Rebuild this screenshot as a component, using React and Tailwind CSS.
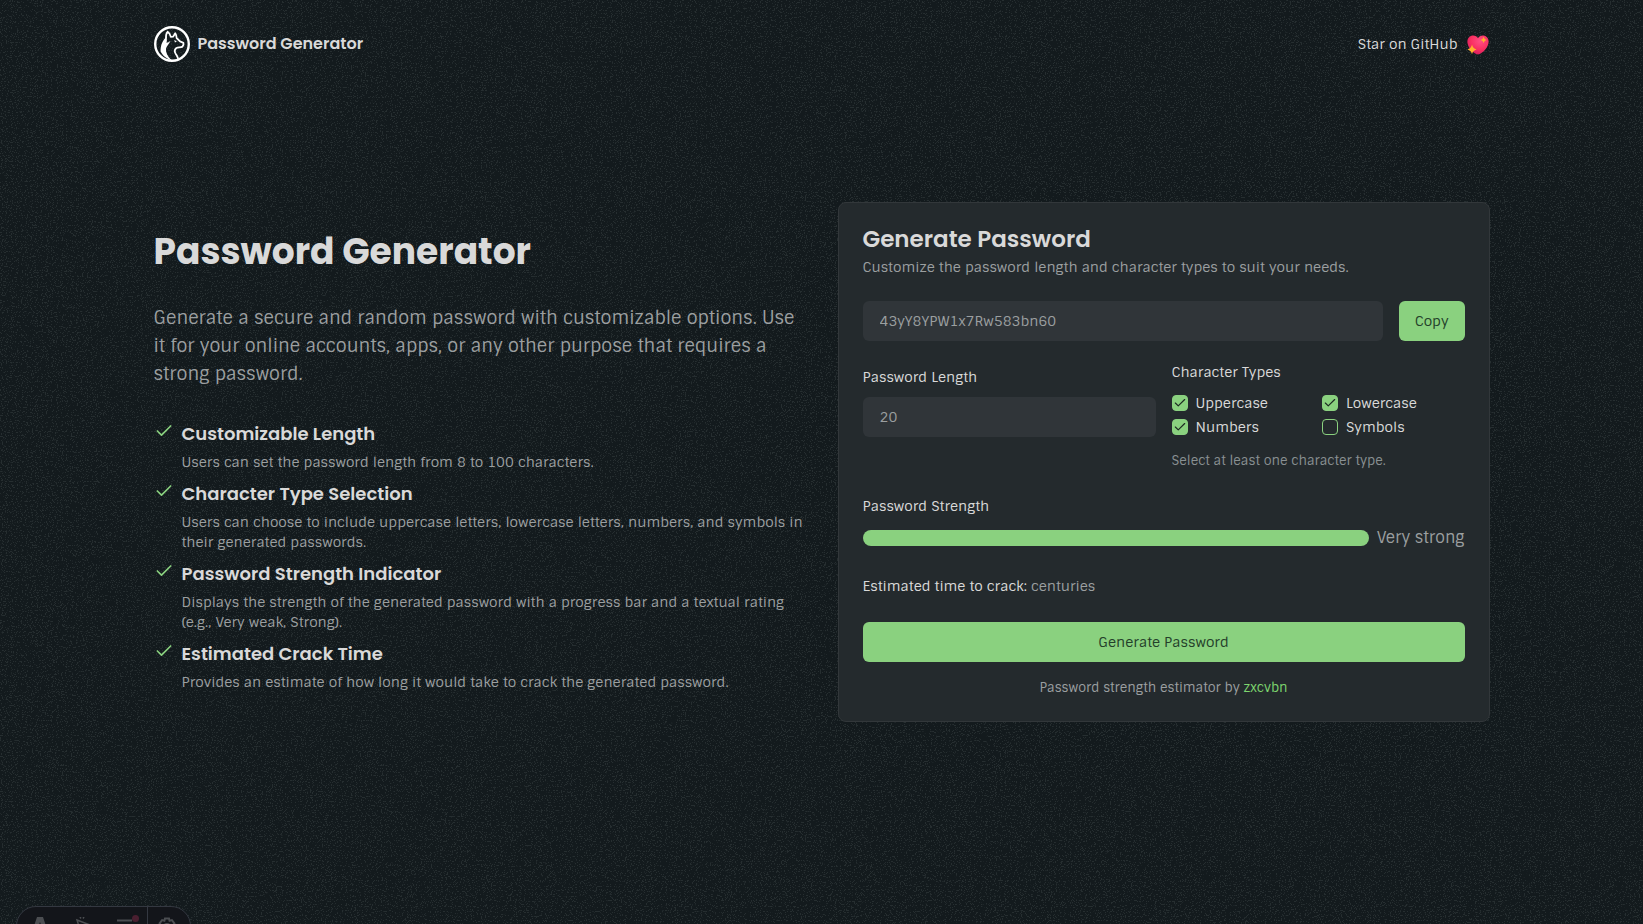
import { Check } from "lucide-react";

const features = [
  ["Customizable Length", "Users can set the password length from 8 to 100 characters."],
  ["Character Type Selection", "Users can choose to include uppercase letters, lowercase letters, numbers, and symbols in their generated passwords."],
  ["Password Strength Indicator", "Displays the strength of the generated password with a progress bar and a textual rating (e.g., Very weak, Strong)."],
  ["Estimated Crack Time", "Provides an estimate of how long it would take to crack the generated password."],
];

const types = [
  ["Uppercase", true],
  ["Lowercase", true],
  ["Numbers", true],
  ["Symbols", false],
];

function Noise() {
  return (
    <svg className="absolute inset-0 -z-10 h-full w-full" aria-hidden="true">
      <filter id="noise" x="0" y="0" width="100%" height="100%" colorInterpolationFilters="sRGB">
        <feTurbulence type="fractalNoise" baseFrequency="0.8" numOctaves="3" stitchTiles="stitch" />
        <feColorMatrix values="0 0 0 0 0.15  0 0 0 0 0.18  0 0 0 0 0.19  14 0 0 0 -8.2" />
      </filter>
      <rect width="100%" height="100%" filter="url(#noise)" />
    </svg>
  );
}

function Logo() {
  return (
    <svg className="size-9 text-white" viewBox="0 0 36 36" fill="none" aria-hidden="true">
      <circle cx="18" cy="18" r="16.8" stroke="currentColor" strokeWidth="2.4" />
      <path d="M12 12.500C11.800 9.500 12.400 7 13.600 5.800 15.200 6.800 16.300 8.800 16.800 10.800L19.200 10.600 21.200 7.200C22.200 8.600 22.600 10.400 22.700 12.200 24 13 25 14.600 26 15.400L29.400 16.800C29.900 18.200 29.200 19.600 28.400 20.600 26.600 21.600 24.400 21.200 22.400 22 20.600 23.400 20.400 25.600 21.600 27.600 22.400 29 23.600 30.600 24.200 32.800" stroke="currentColor" strokeWidth="1.800" strokeLinejoin="round" />
      <path d="M12.400 11C8.600 14.200 6.400 19.400 6.600 25.600 8.800 30 13 33.200 17.600 34.200 13.600 30.600 11.600 26.800 12 22.800 12.400 20.400 14.800 18.400 16.600 14.800 15.200 16 13.800 16.600 12.400 16.800 13 15.200 13.200 13.400 12.400 11Z" fill="currentColor" />
      <path d="M20 14.200 23 15 21.200 16.600Z" fill="currentColor" />
    </svg>
  );
}

function Heart() {
  return (
    <svg className="mt-0.5 size-6" viewBox="0 0 24 24" aria-hidden="true">
      <defs>
        <radialGradient id="heart" cx="0.6" cy="0.3" r="0.8">
          <stop offset="0" stopColor="#ff4f86" />
          <stop offset="0.55" stopColor="#f92f60" />
          <stop offset="1" stopColor="#c9175e" />
        </radialGradient>
      </defs>
      <path fill="url(#heart)" d="M12 5.2C13.2 3 16 2 18.6 2.8c3.2 1 4.6 4.4 3.8 7.8-1.2 5.2-5.2 8.6-8.6 10.4-1.2.6-2.400.6-3.600 0C6.400 19.200 2.600 15.600 1.600 10.600.9 7 2.200 3.800 5.400 2.800 8 2 10.800 3 12 5.200Z" />
      <path fill="#ffb02e" d="M6 11.500q.8 4 4.600 4.900-3.800.9-4.600 4.900-.8-4-4.600-4.900 3.800-.9 4.600-4.900ZM17.600 3.800q.6 2.600 3 3.100-2.400.6-3 3.200-.6-2.600-3-3.200 2.400-.5 3-3.100Z" />
    </svg>
  );
}

function DevToolbar() {
  return (
    <nav aria-label="Developer tools" className="fixed -bottom-[22px] left-4 flex h-10 w-[175px] overflow-hidden rounded-full border border-[#343841] bg-[#13151a] text-[#4b4d51]">
      <button aria-label="Menu" className="flex flex-1 justify-center pt-2.5 pl-0.5">
        <svg className="size-5" viewBox="0 0 20 20" fill="currentColor"><path d="M7 0h6l5 15-5-2-3-8-3 8-5 2Z" /></svg>
      </button>
      <button aria-label="Inspect" className="flex flex-1 justify-center pt-2.5">
        <svg className="size-5" viewBox="0 0 20 20" fill="none" stroke="currentColor" strokeWidth="1.500"><path d="m4 3 13 5-6 2-3 6ZM7 0l1 1.500M11 0l-1 1.500" /></svg>
      </button>
      <button aria-label="Audit" className="relative flex flex-1 justify-center pt-2.5">
        <svg className="size-5" viewBox="0 0 20 20" fill="none" stroke="currentColor" strokeWidth="2"><path d="M1 3.500h15M1 10h15M1 16h15" /></svg>
        <span className="absolute top-2 right-2 size-[7px] rounded-full bg-[#4a1f30]" />
      </button>
      <button aria-label="Settings" className="flex w-[43px] justify-center border-l border-[#343841] pt-2.5 pr-1">
        <svg className="size-5" viewBox="0 0 20 20" fill="none" stroke="currentColor" strokeWidth="2"><path d="M8 1.500h4l.6 2.300 2.300-.7 2.500 3.200-1.200 2 2 1.700-2 1.700 1.200 2-2.500 3.200-2.300-.7L12 18.500H8l-.6-2.300-2.300.7-2.500-3.200 1.200-2-2-1.700 2-1.700-1.200-2 2.500-3.200 2.300.7Z" /><circle cx="10" cy="10" r="3" /></svg>
      </button>
    </nav>
  );
}

export default function App() {
  return (
    <div className="relative isolate flex min-h-screen flex-col bg-[#131a1d] font-['Sintony','Roboto',sans-serif] text-sm text-[#d9d9d9]">
      <Noise />
      <header className="mx-auto flex h-[88px] w-full max-w-[1400px] items-center justify-between px-8">
        <a href="#top" className="flex items-center gap-2 font-['Poppins','Inter',sans-serif] text-base font-semibold">
          <Logo />
          Password Generator
        </a>
        <a href="#star" className="flex items-center gap-2">
          Star on GitHub
          <Heart />
        </a>
      </header>

      <main className="mx-auto grid w-full max-w-[1400px] flex-1 items-center gap-8 px-8 pb-[88px] lg:grid-cols-2">
        <section>
          <h1 className="font-['Poppins','Inter',sans-serif] text-4xl leading-10 font-bold">Password Generator</h1>
          <p className="mt-8 text-lg leading-7 text-[#9b9fa0]">
            Generate a secure and random password with customizable options. Use it for your online accounts, apps, or any other purpose that requires a strong password.
          </p>
          <ul className="mt-8 flex flex-col gap-2">
            {features.map(([title, text]) => (
              <li key={title} className="flex gap-2">
                <Check className="mt-px size-5 shrink-0 text-[#8ad17f]" />
                <div>
                  <h2 className="font-['Poppins','Inter',sans-serif] text-lg leading-7 font-semibold">{title}</h2>
                  <p className="mt-1 leading-5 text-[#9b9fa0]">{text}</p>
                </div>
              </li>
            ))}
          </ul>
        </section>

        <section className="rounded-lg border border-[#32373a] bg-[#242a2d] p-6">
          <h2 className="font-['Poppins','Inter',sans-serif] text-[23px] leading-6 font-semibold">Generate Password</h2>
          <p className="mt-1.5 leading-5 text-[#9b9fa0]">Customize the password length and character types to suit your needs.</p>

          <div className="mt-6 flex gap-4">
            <input aria-label="Generated password" readOnly defaultValue="43yY8YPW1x7Rw583bn60" className="h-10 min-w-0 flex-1 rounded-md border border-transparent bg-[#303539] px-4 text-[#9b9fa0]" />
            <button className="h-10 rounded-md bg-[#8ad17f] px-4 text-[#24402a]">Copy</button>
          </div>

          <div className="mt-6 grid grid-cols-2 gap-4">
            <div>
              <label htmlFor="length" className="block leading-6">Password Length</label>
              <input id="length" defaultValue="20" className="mt-2 h-10 w-full rounded-md border border-transparent bg-[#303539] px-4 text-[#9b9fa0]" />
            </div>
            <fieldset>
              <legend className="leading-[14px]">Character Types</legend>
              <div className="mt-4 grid grid-cols-2 gap-2">
                {types.map(([name, on]) => (
                  <label key={name} className="flex items-center gap-2 leading-4">
                    <span className="relative flex size-4">
                      <input type="checkbox" defaultChecked={on} className="peer size-4 appearance-none rounded-sm border border-[#8ad17f] checked:bg-[#8ad17f]" />
                      <Check strokeWidth={2} className="pointer-events-none invisible absolute inset-0 size-4 p-px text-[#1d2a22] peer-checked:visible" />
                    </span>
                    {name}
                  </label>
                ))}
              </div>
              <p className="mt-4 text-[13px] leading-[19px] text-[#899092]">Select at least one character type.</p>
            </fieldset>
          </div>

          <h3 className="mt-6 leading-6">Password Strength</h3>
          <div className="mt-2 flex items-center gap-2">
            <div role="progressbar" aria-label="Password strength" aria-valuenow={100} className="h-4 flex-1 rounded-full bg-[#8ad17f]" />
            <span className="text-base leading-6 text-[#9b9fa0]">Very strong</span>
          </div>
          <p className="mt-6 leading-6">
            Estimated time to crack: <span className="text-[#9b9fa0]">centuries</span>
          </p>
          <button className="mt-6 h-10 w-full rounded-md bg-[#8ad17f] text-[#24402a]">Generate Password</button>
          <p className="mt-4 text-center text-[13px] leading-[19px] text-[#9b9fa0]">
            Password strength estimator by <a href="#zxcvbn" className="text-[#7ed66f]">zxcvbn</a>
          </p>
        </section>
      </main>
      <DevToolbar />
    </div>
  );
}
